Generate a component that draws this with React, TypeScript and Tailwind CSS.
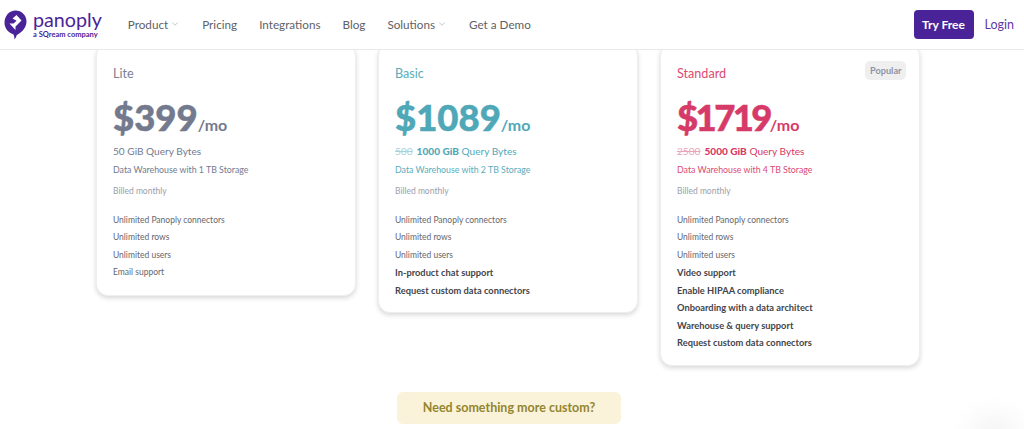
import { ChevronDown } from 'lucide-react';

interface Plan {
  name: string;
  price: string;
  priceTracking?: string;
  was?: string;
  bytes: string;
  storage: string;
  popular?: boolean;
  plain: string[];
  bold: string[];
  nameColor: string;
  priceColor: string;
  wasColor: string;
  storageColor: string;
}

const base = ['Unlimited Panoply connectors', 'Unlimited rows', 'Unlimited users'];

const plans: Plan[] = [
  {
    name: 'Lite',
    price: '$399',
    bytes: '50 GiB',
    storage: 'Data Warehouse with 1 TB Storage',
    plain: [...base, 'Email support'],
    bold: [],
    nameColor: 'text-[#7a8092]',
    priceColor: 'text-[#737a8e]',
    wasColor: '',
    storageColor: 'text-[#737a8e]',
  },
  {
    name: 'Basic',
    price: '$1089',
    was: '500',
    bytes: '1000 GiB',
    storage: 'Data Warehouse with 2 TB Storage',
    plain: base,
    bold: ['In-product chat support', 'Request custom data connectors'],
    nameColor: 'text-[#5aacbb]',
    priceColor: 'text-[#4fa8b8]',
    wasColor: 'text-[#a5d3dc]',
    storageColor: 'text-[#5aacbb]',
  },
  {
    name: 'Standard',
    price: '$1719',
    priceTracking: 'tracking-[-2.6px]',
    was: '2500',
    bytes: '5000 GiB',
    storage: 'Data Warehouse with 4 TB Storage',
    popular: true,
    plain: base,
    bold: [
      'Video support',
      'Enable HIPAA compliance',
      'Onboarding with a data architect',
      'Warehouse & query support',
      'Request custom data connectors',
    ],
    nameColor: 'text-[#dc4a74]',
    priceColor: 'text-[#d63a68]',
    wasColor: 'text-[#eba3b8]',
    storageColor: 'text-[#dc4a74]',
  },
];

function Logo() {
  return (
    <svg width="23" height="30" viewBox="0 0 23 30" className="shrink-0">
      <path
        d="M11.5 0.5C17.6 0.5 22.5 5.3 22.5 11.3C22.5 17 19 21.6 12.6 25.2C12.3 26.8 11.6 28.3 10.4 29.4C10.6 27.6 10.2 25.8 9.3 24.2C4 22.8 0.5 18.2 0.5 12.8C0.5 6 5.3 0.5 11.5 0.5Z"
        fill="#4a2398"
      />
      <path d="M12.5 5L17.5 10.5L11.5 16.5L11.5 20L5.5 13.5L9.6 13.5L12.6 10.8L8.5 8.4Z" fill="#fff" />
    </svg>
  );
}

function NavItem({ label, caret }: { label: string; caret?: boolean }) {
  return (
    <a className="flex items-center gap-[2px] text-[11.7px] leading-[16px] text-[#5f5f66]">
      {label}
      {caret && <ChevronDown className="w-[10px] h-[10px] text-[#a4a4aa]" strokeWidth={1.5} />}
    </a>
  );
}

function PlanCard({ plan }: { plan: Plan }) {
  return (
    <div className="relative w-[260px] shrink-0 bg-white rounded-[12px] border border-[#eeeeee] shadow-[0_2px_5px_rgba(0,0,0,0.16)] pl-4 pr-4 pt-[19px] pb-[13px]">
      {plan.popular && (
        <span className="absolute top-[16px] right-[13px] rounded-[5px] bg-[#efefef] px-[4.5px] py-[3px] text-[9.2px] leading-[13px] font-bold text-[#8e93a3]">
          Popular
        </span>
      )}
      <h3 className={`text-[12.6px] leading-[20px] ${plan.nameColor}`}>{plan.name}</h3>
      <div className={`mt-[11px] flex items-baseline h-[44px] ${plan.priceColor}`}>
        <span className={`text-[36.5px] leading-[44px] font-black [-webkit-text-stroke:0.5px] ${plan.priceTracking ?? ''}`}>
          {plan.price}
        </span>
        <span className="text-[16px] font-bold">/mo</span>
      </div>
      <p className={`mt-[4px] text-[10.1px] leading-[16px] ${plan.priceColor}`}>
        {plan.was && <span className={`line-through mr-[4px] ${plan.wasColor}`}>{plan.was}</span>}
        {plan.was ? <b className="font-black">{plan.bytes}</b> : plan.bytes} Query Bytes
      </p>
      <p className={`mt-[4px] text-[8.8px] leading-[14px] ${plan.storageColor}`}>{plan.storage}</p>
      <p className="mt-[7px] text-[8.5px] leading-[14px] text-[#9a9eac]">Billed monthly</p>
      <ul className="mt-[13.5px] text-[8.5px] leading-[17.5px] text-[#66666c]">
        {plan.plain.map((f) => (
          <li key={f}>{f}</li>
        ))}
        {plan.bold.map((f) => (
          <li key={f} className="text-[9.3px] font-bold text-[#44444a]">
            {f}
          </li>
        ))}
      </ul>
    </div>
  );
}

export default function App() {
  return (
    <div className="relative h-[429px] overflow-hidden bg-white font-['Lato',sans-serif]">
      <nav className="relative z-10 h-[50px] bg-white border-b border-[#e9e9e9] flex items-center pl-[4px] pr-[10px]">
        <Logo />
        <div className="ml-[6px] mr-[26px] flex flex-col">
          <span className="text-[19.7px] leading-[20px] text-[#4a2398]">panoply</span>
          <span className="text-[7.5px] leading-[9px] font-bold text-[#4a2398]">a SQream company</span>
        </div>
        <div className="flex items-center gap-[22px] -mt-[2px]">
          <NavItem label="Product" caret />
          <NavItem label="Pricing" />
          <NavItem label="Integrations" />
          <NavItem label="Blog" />
          <NavItem label="Solutions" caret />
          <NavItem label="Get a Demo" />
        </div>
        <div className="ml-auto flex items-center gap-[11px]">
          <button className="h-[29px] w-[60px] rounded-[4px] bg-[#4a2398] text-[12px] font-bold text-white">
            Try Free
          </button>
          <a className="text-[12.5px] leading-[16px] text-[#5f3aa6]">Login</a>
        </div>
      </nav>
      <main className="-mt-[6px] pl-[96px]">
        <div className="flex items-start gap-[22px]">
          {plans.map((p) => (
            <PlanCard key={p.name} plan={p} />
          ))}
        </div>
      </main>
      <div className="absolute top-[392px] left-[397px] w-[224px] h-[32px] rounded-[6px] bg-[#faf3d9] flex items-center justify-center text-[12.5px] font-bold text-[#94852f]">
        Need something more custom?
      </div>
      <div className="absolute right-[5px] -bottom-[14px] w-[50px] h-[26px] rounded-full bg-[#f3f3f3] blur-md" />
    </div>
  );
}
